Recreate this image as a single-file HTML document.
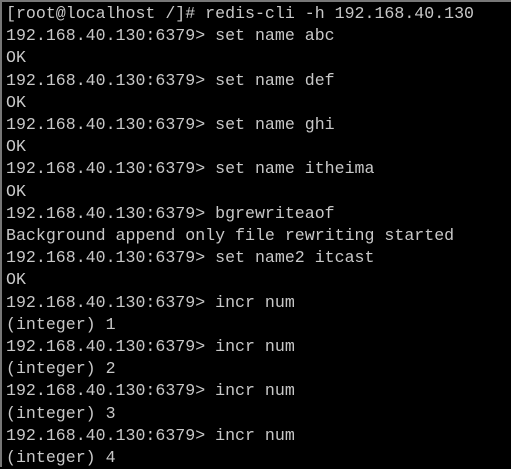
<!DOCTYPE html><html><head><style>
html,body{margin:0;padding:0;background:#000;width:511px;height:467px;overflow:hidden}
.t{position:absolute;left:0;top:0;width:509px;height:465px;border-top:2px solid #777;border-left:2px solid #777;background:#000}
pre{margin:0;position:absolute;left:4px;top:1px;font-family:"Liberation Mono",monospace;font-size:16.6px;line-height:22.2px;color:#c8c8c8}
</style></head><body><div class="t"><pre>[root@localhost /]# redis-cli -h 192.168.40.130
192.168.40.130:6379&gt; set name abc
OK
192.168.40.130:6379&gt; set name def
OK
192.168.40.130:6379&gt; set name ghi
OK
192.168.40.130:6379&gt; set name itheima
OK
192.168.40.130:6379&gt; bgrewriteaof
Background append only file rewriting started
192.168.40.130:6379&gt; set name2 itcast
OK
192.168.40.130:6379&gt; incr num
(integer) 1
192.168.40.130:6379&gt; incr num
(integer) 2
192.168.40.130:6379&gt; incr num
(integer) 3
192.168.40.130:6379&gt; incr num
(integer) 4</pre></div></body></html>
